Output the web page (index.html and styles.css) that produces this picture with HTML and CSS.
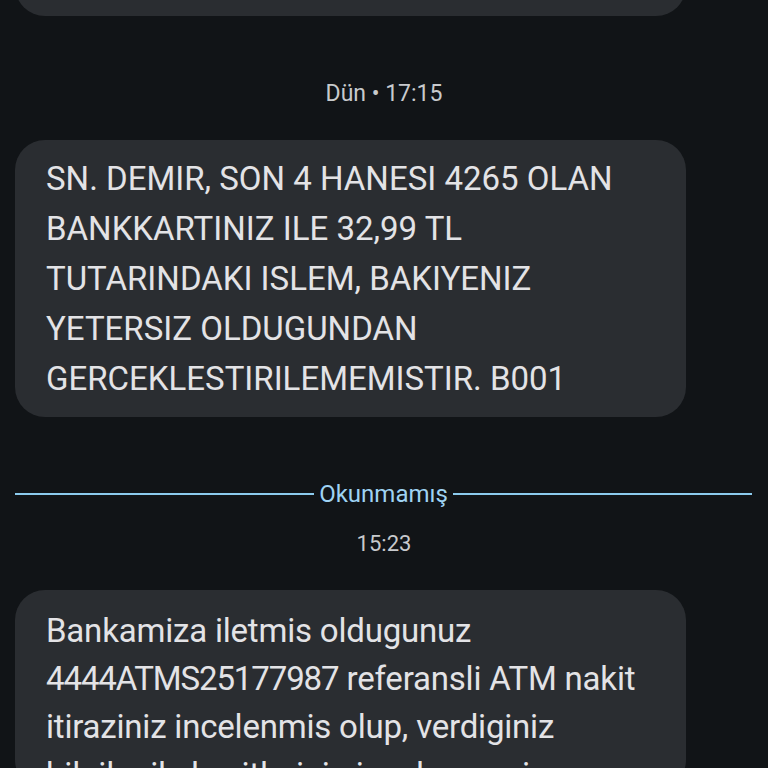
FILE: index.html
```html
<!DOCTYPE html>
<html lang="tr">
<head>
<meta charset="utf-8">
<title>Mesajlar</title>
<link rel="stylesheet" href="styles.css">
</head>
<body>
<main class="thread">
  <div class="bubble bubble-prev"></div>

  <div class="stamp stamp-first">Dün • 17:15</div>

  <div class="bubble bubble-caps">
    <p class="bubble-text">SN. DEMIR, SON 4 HANESI 4265 OLAN<br>BANKKARTINIZ ILE 32,99 TL<br>TUTARINDAKI ISLEM, BAKIYENIZ<br>YETERSIZ OLDUGUNDAN<br>GERCEKLESTIRILEMEMISTIR. B001</p>
  </div>

  <div class="unread">
    <span class="unread-line"></span>
    <span class="unread-label">Okunmamış</span>
    <span class="unread-line"></span>
  </div>

  <div class="stamp stamp-second">15:23</div>

  <div class="bubble bubble-last">
    <p class="bubble-text">Bankamiza iletmis oldugunuz<br><span class="ref">4444ATMS25177987</span> referansli ATM nakit<br>itiraziniz incelenmis olup, verdiginiz<br>bilgiler ile kesitlerinin incelenmesi sonucu</p>
  </div>
</main>
</body>
</html>
```

FILE: styles.css
```css
html, body {
  margin: 0;
  padding: 0;
  background: #111417;
  height: 768px;
  overflow: hidden;
}

.thread {
  display: flex;
  flex-direction: column;
  font-family: Roboto, "Noto Sans", "Liberation Sans", sans-serif;
}

.bubble {
  background: #2a2d31;
  border-radius: 30px;
  width: 671px;
  margin-left: 15px;
  box-sizing: border-box;
  padding: 14px 20px 13px 31px;
}

.bubble-prev {
  margin-top: -84px;
  height: 100px;
}

.bubble-text {
  margin: 0;
  color: #e3e3e6;
  font-size: 33px;
  line-height: 50px;
  white-space: nowrap;
}

.bubble-last {
  height: 200px;
  overflow: hidden;
  padding-top: 17px;
}

.bubble-last .bubble-text {
  line-height: 48px;
  letter-spacing: -0.2px;
}

.ref {
  letter-spacing: -1.1px;
}

.stamp {
  text-align: center;
  color: #c8cacd;
  font-size: 22px;
  line-height: 28px;
  height: 28px;
}

.stamp-first {
  font-size: 23px;
  margin-top: 64px;
  margin-bottom: 32px;
}

.bubble-caps {
  height: 277px;
}

.unread {
  display: flex;
  align-items: center;
  gap: 5px;
  margin: 62px 16px 0 15px;
  height: 30px;
}

.unread-line {
  flex: 1;
  height: 2px;
  background: #8ccbee;
}

.unread-label {
  color: #9fd3f3;
  font-size: 24px;
  line-height: 30px;
}

.stamp-second {
  margin-top: 21px;
  margin-bottom: 32px;
}
```
